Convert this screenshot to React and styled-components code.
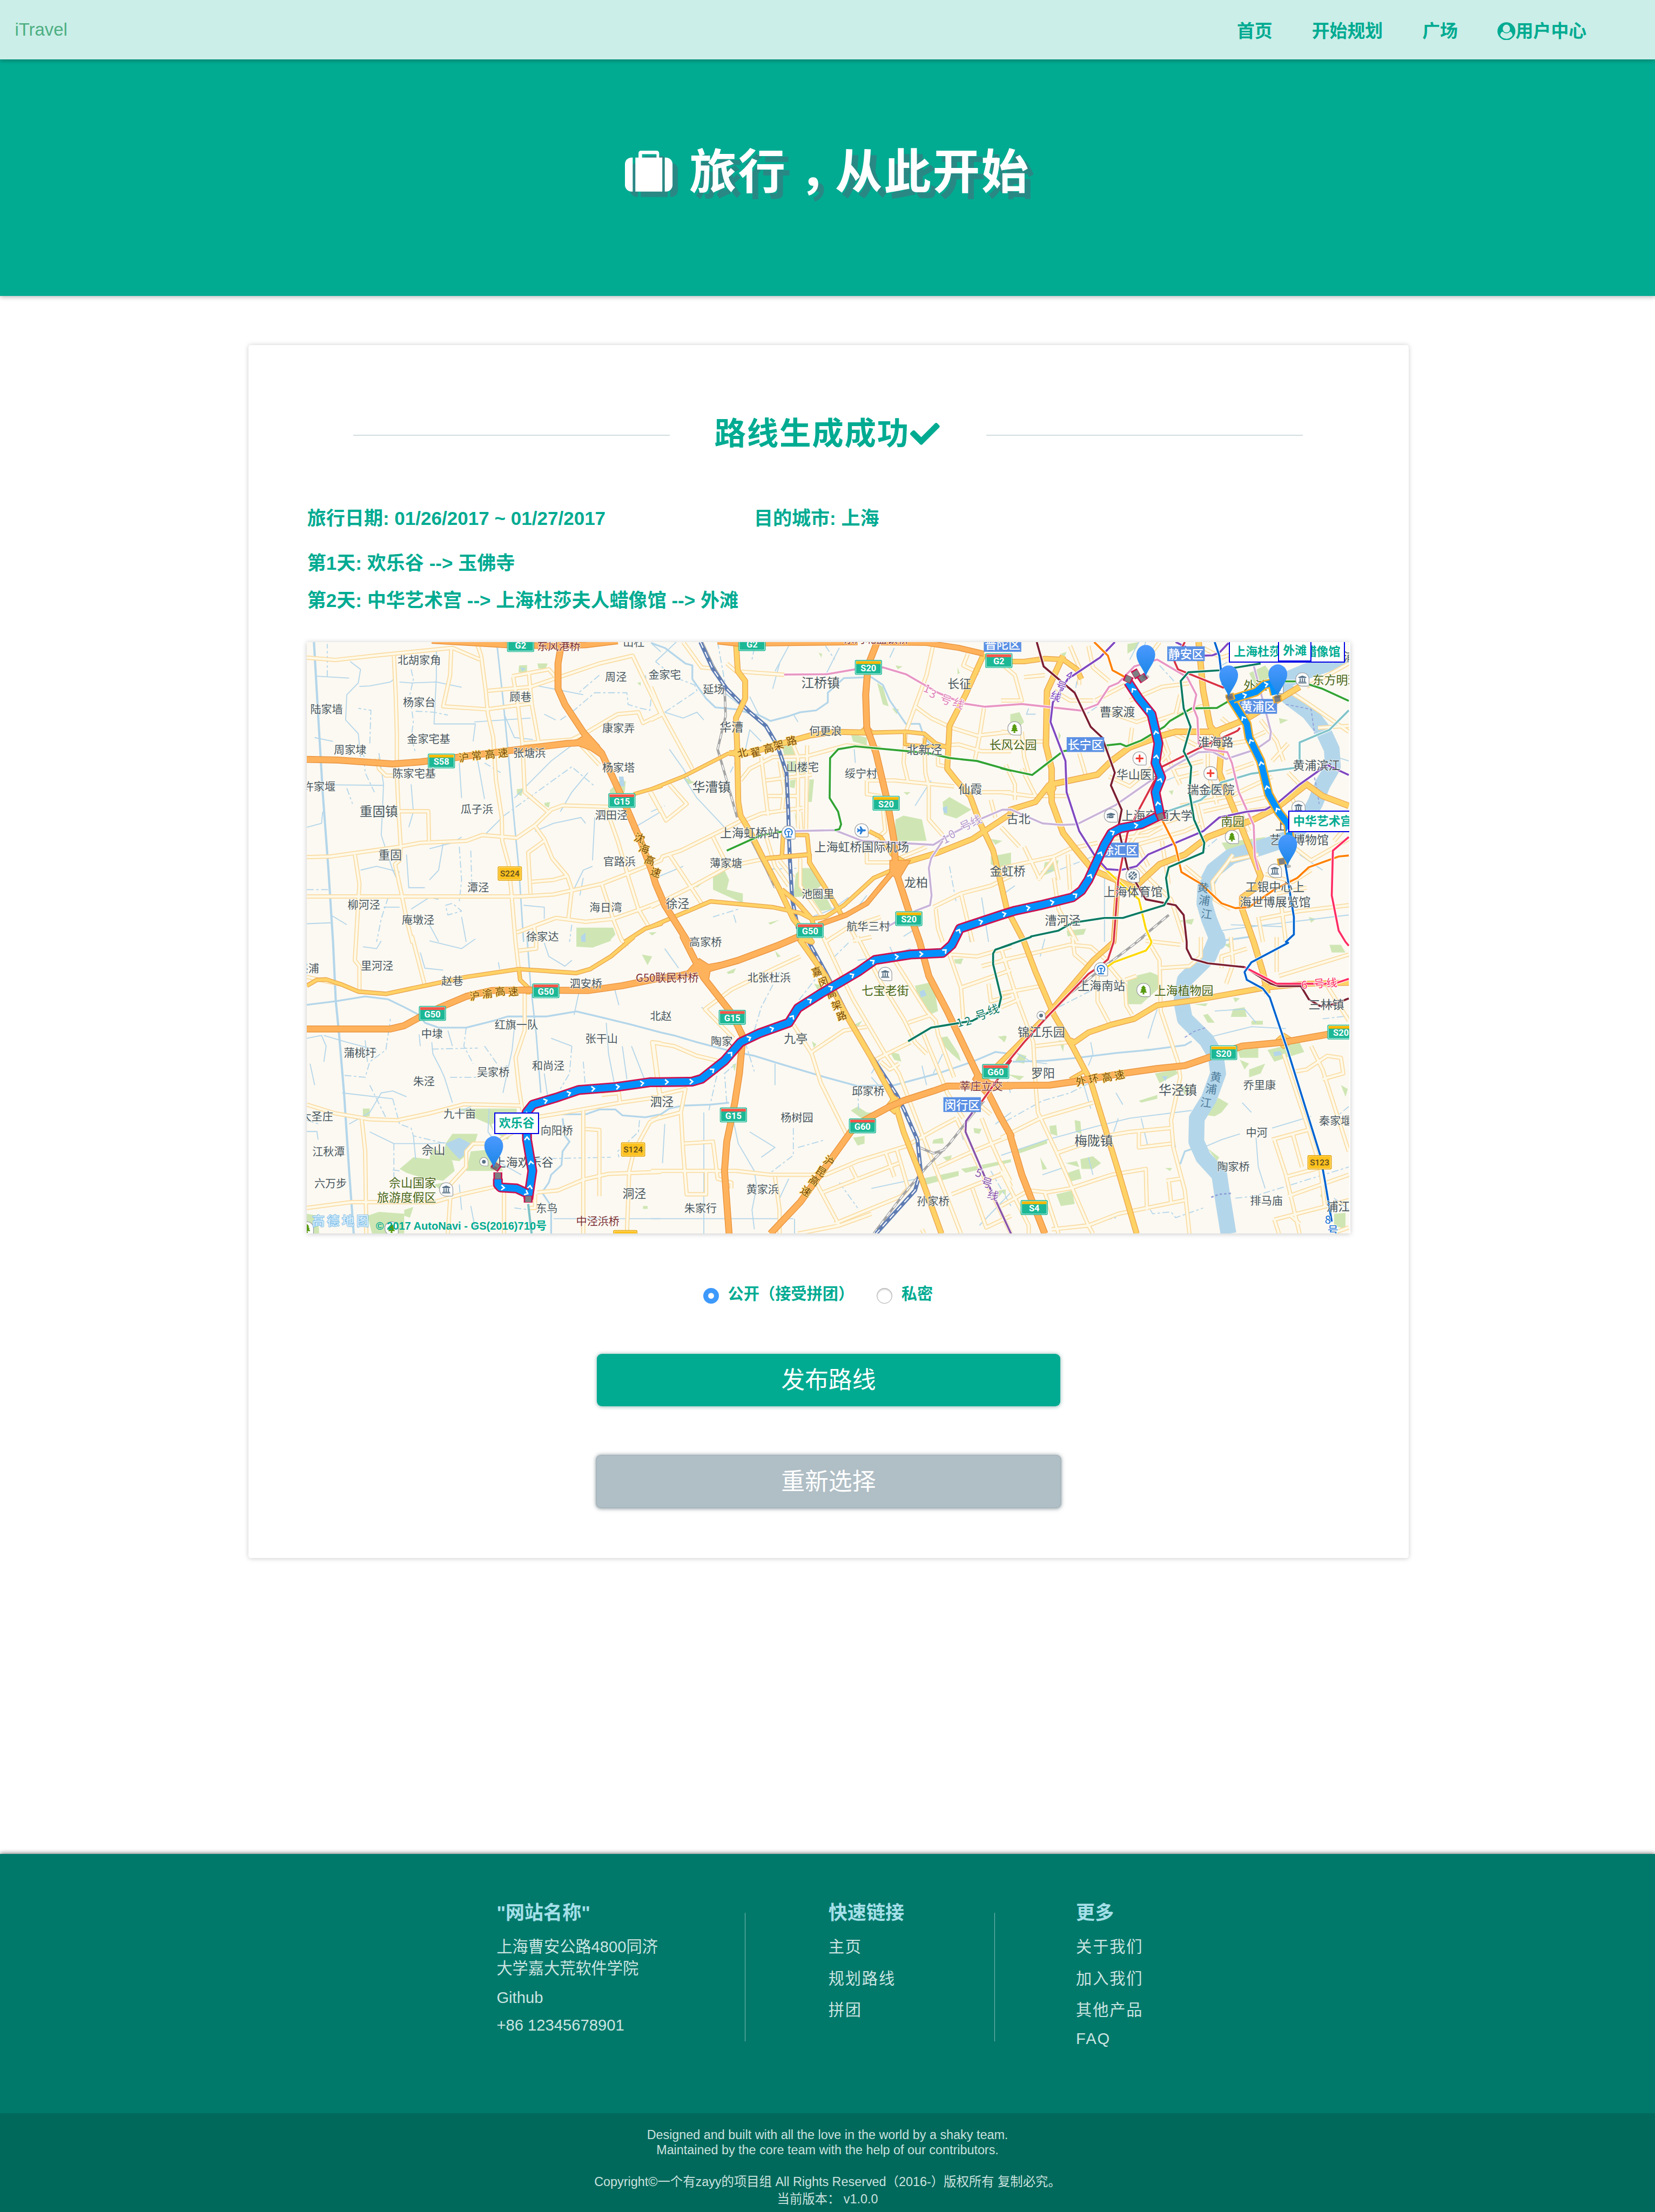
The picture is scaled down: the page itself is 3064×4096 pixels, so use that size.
import React from "react";
import styled, { createGlobalStyle, css } from "styled-components";
import {
  FaTree,
  FaPlus,
  FaUniversity,
  FaGraduationCap,
  FaBasketballBall,
  FaPlane,
  FaCheck,
} from "react-icons/fa";

/* 1rem = ten layout units; the whole page scales with the root font size. */
const Global = createGlobalStyle`
  html { font-size: 9.13px; }
  body {
    margin: 0;
    background: #fff;
    font-family: "Liberation Sans", Arial, "Noto Sans CJK SC", sans-serif;
    -webkit-font-smoothing: antialiased;
  }
  * { box-sizing: border-box; }
`;

const teal = "#00ab92";

const Page = styled.div`
  display: flex;
  flex-direction: column;
  width: 335.6rem;
  min-height: 4096px;
  overflow: hidden;
`;

/* ---------- navigation ---------- */
const Nav = styled.nav`
  position: relative;
  z-index: 1;
  display: flex;
  align-items: center;
  justify-content: space-between;
  height: 12rem;
  padding: 0 13.9rem 0 3rem;
  background: #cceee8;
  box-shadow: 0 0.3rem 0.9rem rgba(0, 0, 0, 0.28);
`;
const Brand = styled.a`
  font-size: 3.6rem;
  line-height: 12rem;
  color: #4caf82;
`;
const NavLinks = styled.div`
  display: flex;
  gap: 8rem;
  padding-top: 0.6rem;
`;
const NavLink = styled.a`
  display: flex;
  align-items: center;
  font-size: 3.6rem;
  font-weight: bold;
  line-height: 4.8rem;
  color: ${teal};
  svg {
    width: 3.7rem;
    height: 3.7rem;
    margin-right: 0;
  }
`;

/* ---------- hero ---------- */
const Hero = styled.header`
  display: flex;
  justify-content: center;
  height: 48rem;
  padding-top: 17rem;
  background: ${teal};
  box-shadow: 0 0.3rem 0.9rem rgba(0, 0, 0, 0.28);
`;
const HeroTitle = styled.h1`
  display: flex;
  align-items: center;
  gap: 3.4rem;
  height: 12rem;
  margin: 0;
  font-size: 9.6rem;
  line-height: 12rem;
  letter-spacing: 0.28rem;
  color: #fff;
  text-shadow: 1.2rem 1.2rem 0 #298884;
  svg {
    width: 9.65rem;
    height: 8.3rem;
    margin-top: -0.5rem;
    overflow: visible;
    filter: drop-shadow(1.2rem 1.2rem 0 #298884);
  }
`;
const Comma = styled.span`
  padding: 0 0.22em 0 0.27em;
  font-feature-settings: "halt";
`;

/* ---------- result card ---------- */
const Card = styled.main`
  display: flex;
  flex-direction: column;
  width: 235.2rem;
  height: 246rem;
  margin: 10rem 0 0 50.4rem;
  padding: 12.9rem 11.8rem 0;
  border-radius: 0.5rem;
  background: #fff;
  box-shadow: 0 0.1rem 1rem rgba(0, 0, 0, 0.2);
`;
const CardHead = styled.div`
  display: flex;
  align-items: center;
  justify-content: space-between;
  height: 10rem;
  padding: 0 9.6rem 0 9.4rem;
`;
const Rule = styled.span`
  width: 64.2rem;
  height: 0.2rem;
  margin-top: 0.8rem;
  background: #d3dede;
`;
const CardTitle = styled.h2`
  display: flex;
  align-items: center;
  margin: 0;
  font-size: 6.4rem;
  line-height: 10rem;
  letter-spacing: 0.2rem;
  color: ${teal};
  svg {
    width: 6rem;
    height: 6rem;
    margin: 0.2rem 0.4rem 0 0.1rem;
  }
`;
const Facts = styled.div`
  display: flex;
  margin-top: 9.2rem;
`;
const Fact = styled.p`
  width: ${(p) => p.$w || "auto"};
  margin: ${(p) => p.$gap || 0} 0 0;
  padding-left: 0.1rem;
  font-size: 3.84rem;
  font-weight: bold;
  line-height: 6.1rem;
  white-space: nowrap;
  color: ${teal};
`;

/* ---------- map ---------- */
const MapBox = styled.section`
  width: 211.6rem;
  height: 120rem;
  margin-top: 5.4rem;
  box-shadow: 0 0.1rem 1rem rgba(0, 0, 0, 0.22);
`;
const MapClip = styled.div`
  position: relative;
  width: 211.4rem;
  height: 120rem;
  overflow: hidden;
`;
const Sheet = styled.svg`
  display: block;
  width: 211.4rem;
  height: 120rem;
  font-family: "Noto Sans CJK SC", sans-serif;
`;
const Callout = styled.div`
  position: absolute;
  left: ${(p) => p.$x}rem;
  top: ${(p) => p.$y}rem;
  padding: 0.85rem 0.75rem;
  border: 2px solid #0000e6;
  background: #fff;
  font-size: 2.4rem;
  font-weight: bold;
  line-height: 2.25rem;
  white-space: nowrap;
  color: ${teal};
`;
const Attribution = styled.div`
  position: absolute;
  left: 14rem;
  top: 117rem;
  font-size: 2.2rem;
  font-weight: bold;
  line-height: 3rem;
  white-space: nowrap;
  color: ${teal};
`;
const Watermark = styled.div`
  position: absolute;
  left: 1.1rem;
  top: 116.3rem;
  font-size: 2.5rem;
  font-weight: 500;
  line-height: 2.6rem;
  letter-spacing: 0.5rem;
  white-space: nowrap;
  color: #d9eefb;
  -webkit-text-stroke: 0.2rem #7cbce8;
  paint-order: stroke fill;
`;

/* ---------- form ---------- */
const Choices = styled.div`
  display: flex;
  align-items: center;
  height: 6rem;
  margin: 9.6rem 0 0 80.4rem;
`;
const Choice = styled.label`
  display: flex;
  align-items: center;
  gap: 1.8rem;
  margin-right: 4.6rem;
  font-size: 3.2rem;
  font-weight: bold;
  line-height: 5.4rem;
  color: ${teal};
  span { padding-bottom: 0.5rem; }
`;
const Dot = styled.i`
  width: 3.2rem;
  height: 3.2rem;
  border-radius: 50%;
  ${(p) =>
    p.$on
      ? css`
          border: 1rem solid #3d99fc;
          background: #fff;
          box-shadow: inset 0 0 0.1rem rgba(0, 0, 0, 0.3);
        `
      : css`
          border: 1px solid #a6a6a6;
          background: #fff;
          box-shadow: inset 0 0.2rem 0.3rem rgba(0, 0, 0, 0.22);
        `}
`;
const Button = styled.button`
  align-self: center;
  width: ${(p) => (p.$muted ? "94.4rem" : "94rem")};
  height: ${(p) => (p.$muted ? "10.8rem" : "10.6rem")};
  margin-top: ${(p) => (p.$muted ? "9.9rem" : "8.8rem")};
  padding: 0;
  border: ${(p) => (p.$muted ? "2px solid #a9b7be" : "0")};
  border-radius: 1rem;
  background: ${(p) => (p.$muted ? "#b0bec5" : teal)};
  box-shadow: 0 0.1rem 0.8rem ${(p) => (p.$muted ? "rgba(60,80,90,.55)" : "rgba(0,90,80,.45)")};
  font-family: inherit;
  font-size: 4.8rem;
  line-height: 10rem;
  color: #fff;
`;

/* ---------- footer ---------- */
const Footer = styled.footer`
  margin-top: 60rem;
  background: #00796b;
  box-shadow: 0 -0.1rem 0.9rem rgba(0, 0, 0, 0.6);
`;
const FooterTop = styled.div`
  display: flex;
  height: 52.6rem;
  padding: 9.4rem 0 0 100.7rem;
`;
const Column = styled.div`
  width: ${(p) => p.$w};
  padding-left: ${(p) => p.$pad || 0};
  letter-spacing: ${(p) => (p.$spaced ? "0.2rem" : "0")};
`;
const Divider = styled.span`
  width: 0.2rem;
  height: 26rem;
  margin-top: 2.6rem;
  background: #7fbbb3;
`;
const ColumnTitle = styled.h4`
  margin: 0 0 2.3rem;
  font-size: 3.84rem;
  line-height: 5rem;
  letter-spacing: 0;
  color: #a4dfe8;
`;
const ColumnItem = styled.p`
  margin: ${(p) => p.$gap || 0} 0 0;
  font-size: 3.2rem;
  line-height: 4.4rem;
  white-space: nowrap;
  color: #cce4e1;
`;
const Legal = styled.div`
  height: 20.4rem;
  padding-top: 3rem;
  background: #00695c;
  text-align: center;
  font-size: 2.56rem;
  color: #cce1de;
`;
const LegalLine = styled.p`
  margin: ${(p) => p.$gap || 0} 0 0;
  line-height: ${(p) => (p.$tall ? "3.6rem" : "3rem")};
  white-space: pre;
`;

/* ================= map data ================= */
/* Coordinates are written per map tile: a letter picks the tile, then x,y pairs follow. */
const TILE = {
  A: [610, 1290], B: [1320, 1290], C: [2030, 1290],
  D: [610, 1900], E: [1320, 1900], F: [2030, 1900],
};
const SX = 730 / 1568;
const SY = 620 / 1568;
const at = (t, x, y) => [TILE[t][0] + x * SX, TILE[t][1] + y * SY];
const parse = (s) => {
  let t = "A";
  const out = [];
  s.trim().split(/\s+/).forEach((k) => {
    if (TILE[k]) t = k;
    else {
      const [x, y] = k.split(",").map(Number);
      out.push(at(t, x, y));
    }
  });
  return out;
};
const pts = (s) => parse(s).map((p) => p.map((n) => n.toFixed(1)).join(",")).join(" ");
const list = (s) => s.split(/[;\n]/).map((x) => x.trim()).filter(Boolean);
/* Each block names its tile first and is followed by polylines separated by ";" */
const block = (o) => Object.entries(o).flatMap(([t, s]) => list(s).map((l) => `${t} ${l}`));

const canals = [
  "A 57,30 75,400 95,800 120,1200 140,1568 D 152,330 165,480 188,800 210,1200 230,1522",
  "D 26,348 150,330 280,305 380,320 450,360 515,400 540,440 600,465 720,465 840,430 900,408 1070,408 1200,382 1300,410 1440,450 1568,490 E 100,505 200,540 330,580 450,610 560,650 760,720 900,765 1060,760 1250,700 1400,640 1500,590 1568,600",
  "F 50,640 200,635 330,620 500,595 640,580 800,555 830,535",
  "D 1130,910 1240,910 1300,885 1370,885 1400,915 1500,925 1568,910 E 80,880 140,865 260,860 340,850",
  "D 1140,930 1150,1020 1170,1050 1140,1100 1135,1170 1090,1220 1080,1260 1050,1310 1090,1380 1090,1522",
  "B 0,35 60,60 150,140 180,150 180,220 240,320 280,365 370,375 430,395 470,405 520,435 600,410 650,390 720,380 770,340 770,290 840,215 960,210 1010,250 1040,330 1110,450 1170,450 1190,520 1230,570",
  "F 780,1165 800,1100 850,1080", "F 960,20 1080,0",
];
const creeks = [
  "A 853,30 880,320 905,620 930,960 950,1200 970,1568",
  "D 985,0 1000,240 1025,500 1045,800",
  "A 350,1020 400,1200 440,1300",
  ...block({
    A: `430,235 480,240 590,235 700,262; 215,130 260,170 250,240 200,300 195,430 250,500 260,620; 255,258 300,255 390,235 410,215
      480,170 490,220 475,300 490,440 480,520 500,600; 590,60 590,210 580,450 760,450 750,540; 755,440 1000,420; 500,385 580,390 640,405
      340,600 360,760 355,900 350,1020 ; 95,762 360,765 ; 26,1300 120,1300; 26,1475 130,1470; 130,1430 200,1480; 380,1340 350,1450 330,1568
      700,1030 660,1060 560,1090; 885,920 800,1020; 885,920 1180,670 1280,770; 930,830 1090,640 1180,560 1220,490
      885,400 930,520 1010,530; 1130,430 1190,380 1280,290 1420,290 1425,350 1480,370 1520,380 1525,320 1500,200
      1020,1000 1100,960 1220,930 1240,960; 1280,930 1270,1150; 630,1380 660,1370 700,1410 640,1430 630,1380; 1180,1320 1230,1200 1270,1180
      970,1380 1060,1390 1060,1450; 115,210 115,40; 70,205 210,215; 60,520 140,540; 300,550 305,380 250,370; 690,650 700,830; 770,640 800,835
      800,650 870,700; 260,1200 330,1180 430,1210; 480,1400 560,1340 600,1350; 690,1080 700,1250 690,1360; 460,1120 470,1290 540,1290
      700,1440 720,1568; 1180,1480 1170,1568; 1110,430 1060,400; 1010,250 1230,300; 1300,200 1210,290; 1250,700 1180,800 1130,900
      360,1390 430,1390; 270,560 280,700 320,800; 1440,990 1568,900; 1530,40 1568,80; 1540,180 1568,210; 600,1568 560,1480
      26,980 90,960 95,900; 200,780 225,860; 480,760 490,900 470,980; 620,1060 600,1200 560,1250; 740,1100 745,1290; 1230,1240 1215,1330`,
    B: `20,130 110,30; 60,390 200,280 190,250 100,210 20,130; 60,390 140,420 200,390 230,430; 320,290 430,395; 290,30 330,290; 430,310 470,405
      410,590 430,480 480,540; 345,700 370,640 400,590; 1220,740 1150,870; 430,1010 480,1100 540,1290 600,1320 660,1380 700,1440 790,1400 860,1340
      1300,1180 1330,1370; 885,580 890,650; 140,720 200,830 320,980; 450,60 440,120; 560,140 530,270; 600,50 540,180; 760,50 800,120; 1060,60 1040,110
      80,580 140,680 170,740; 0,900 60,870; 620,400 640,440; 930,700 1000,680 1000,640; 520,1195 640,1190; 1480,560 1500,600; 20,1240 140,1180
      1350,1320 1390,1568; 1440,1340 1470,1568; 1100,1540 1180,1480; 270,1440 380,1400; 360,1430 370,1470; 820,60 760,200; 1280,640 1290,700; 900,1390 940,1330`,
    C: `150,400 110,400 120,370; 330,230 320,300 370,400 420,360; 60,1280 0,1330; 560,120 600,30; 690,150 760,240; 900,1520 1020,1500 1514,1430; 1000,1480 1230,1490
      940,1040 870,1110; 1410,600 1514,640; 450,1210 450,1568; 400,1130 250,1200 150,1210; 720,740 760,720; 1300,1120 1400,1200; 960,150 1050,90; 630,30 600,110`,
    D: `100,505 200,540 330,580; 400,830 430,960 480,980 490,1020 630,1060; 515,500 520,560; 570,540 575,600 610,680 625,720 660,850; 720,465 710,560 750,650
      930,460 920,580 880,800; 26,520 90,505 110,560 100,640; 26,940 80,960; 26,998 70,998 75,1040; 180,800 400,830; 190,710 280,720 300,640 370,580 390,420
      210,960 300,900 350,800 400,790 460,820; 300,1000 405,1060 570,1060 630,1055; 405,1060 405,1300; 870,1160 960,1220; 820,880 815,1000 840,1040
      1475,940 1470,1000 1380,1100 1385,1130; 350,20 330,60 270,50; 520,80 540,160 620,170; 860,130 870,190; 1060,30 1080,100 1150,150 1180,120; 560,20 700,60 760,10
      1180,560 1170,700 1130,780; 1330,440 1340,600 1370,780; 1400,560 1420,730; 650,720 760,720 900,660; 1210,290 1190,400; 1365,260 1385,350; 960,1140 1350,1130
      1100,1445 1568,1445; 690,1270 700,1400; 930,1390 1000,1400; 760,860 680,900; 400,1195 430,1200; 300,760 380,950; 1440,560 1500,740; 280,530 290,640; 570,575 770,570
      1060,700 1080,860; 1090,520 1180,560; 1230,640 1240,780; 40,650 60,760; 640,480 660,560; 800,560 860,660; 490,1020 500,1140; 740,1380 760,1500`,
    E: `330,850 320,700 370,650; 360,950 380,1060 450,1200 460,1280 440,1400 450,1500; 540,650 540,760; 620,980 620,1120 520,1210; 0,1445 620,1445; 625,1445 625,1522
      900,780 905,900; 960,720 990,760; 220,360 330,480; 560,180 480,360 450,480; 60,960 50,1160; 230,900 230,1522; 410,540 450,690; 900,120 1060,90 1130,60
      1010,600 960,700; 740,180 640,330; 1040,50 1060,100; 1270,600 1230,700; 820,1260 900,1390; 960,1290 1160,1240; 430,1000 540,1080 480,1130; 640,1080 760,1040
      1500,960 1568,900; 1340,960 1360,1040; 1480,1200 1568,1380; 1180,660 1200,760; 600,1240 560,1340; 860,30 800,100; 60,60 120,160; 1568,1310 1430,1480; 300,640 250,900`,
    F: `60,590 130,640 200,650; 390,540 400,600 380,660; 20,945 180,840 300,800 400,740; 0,1120 200,1040 420,970 560,930 830,890; 880,1080 960,1040 1040,1010
      1020,1340 1100,1330 1514,1180; 680,370 660,440 640,520; 510,930 490,1000; 650,1400 660,1420 740,1410 760,1440 880,1390; 1110,1030 1120,1180 1150,1290
      920,510 1090,460 1240,470; 1400,420 1514,405; 1350,920 1180,980; 380,1130 400,1220; 1514,870 1420,960; 930,380 1060,370 1110,440; 190,10 170,100; 250,360 400,270
      360,760 390,880; 500,800 530,860; 40,800 20,700; 180,1220 280,1180; 610,930 640,1080; 330,1480 500,1440; 1050,850 1090,900; 1450,1340 1514,1400; 760,1080 740,980`,
  }),
];
const river =
  "C 1500,110 1330,180 1230,230 1250,310 1340,390 1400,480 1440,580 1445,670 1400,760 1370,850 1330,940 1270,1030 1130,1085 1000,1130 925,1200 890,1280 885,1370 905,1450 945,1568 F 940,0 905,100 800,220 785,330 800,420 895,530 935,610 945,700 905,830 852,930 850,1050 880,1130 950,1220 965,1340 990,1522";
const ponds = [
  "D 630,1060 690,1030 740,1060 720,1110 690,1140 650,1090", "F 1185,590 1215,585 1225,605 1190,612",
  "E 1170,280 1190,270 1200,300 1175,310", "A 955,160 980,165 965,180", "B 1270,880 1290,870 1290,910 1275,905",
  "A 1385,720 1405,720 1410,770 1390,770", "A 1220,1540 1240,1520 1240,1568 1222,1568", "F 700,715 725,715 715,740",
];
const greens = block({
  A: `950,150 985,148 985,185 948,185; 1030,140 1075,140 1065,170 1035,165; 940,785 970,780 960,820 942,810; 1060,855 1085,850 1080,880 1063,870
    1395,735 1415,745 1410,800 1350,830 1345,790; 1200,1495 1360,1495 1370,1530 1340,1568 1200,1568; 1465,240 1480,235 1480,255; 1515,1520 1550,1518 1530,1535`,
  B: `730,85 745,90 742,110; 985,240 1010,260 1035,360 1010,350; 570,560 610,560 630,620 580,610; 590,640 650,640 680,700 600,700; 690,735 710,735 700,850 685,850
    1270,850 1300,825 1395,890 1330,935 1275,915; 1065,940 1100,920 1180,940 1200,1050 1060,1050; 655,1190 700,1190 750,1270 690,1330 620,1340 630,1220
    270,1220 320,1200 340,1250 330,1300 400,1320 400,1370 270,1300; 700,1340 760,1330 790,1400 740,1410; 140,720 190,750 160,760; 870,500 940,520 940,560 880,540
    1480,1130 1568,1110 1568,1210 1480,1170; 1050,370 1080,375 1070,400; 1480,1040 1530,1050 1500,1070; 605,740 630,735 625,780 605,775; 625,900 640,960 635,990
    1100,800 1130,800 1115,815; 190,1270 230,1260 200,1290; 1065,150 1095,155 1075,170; 1335,160 1345,190 1335,195; 510,1470 560,1455 520,1480`,
  C: `40,400 80,390 100,440 40,510; 550,40 600,30 590,60 550,90; 400,560 470,560 470,600; 960,1060 1150,1030 1140,1060 980,1100; 250,490 260,510 250,540
    285,1510 370,1500 360,1530 290,1540; 190,1160 250,1150 240,1200 180,1230; 0,1130 30,1120 40,1190; 260,90 285,80 275,110; 1210,420 1250,430 1215,450; 1300,940 1400,900 1360,960
    1080,190 1150,150 1180,200 1110,260; 1340,1440 1370,1450 1350,1470; 770,1460 840,1450 830,1480; 560,940 590,930 580,960; 730,795 750,790 745,815`,
  D: `1200,0 1350,0 1350,20 1270,55 1200,50; 690,880 940,880 940,920 830,960 840,1000 820,960 760,930; 630,1060 660,1010 770,1010 760,1050 720,1120 690,1150 620,1140
    430,1190 490,1130 560,1140 570,1080 620,1110 660,1150 670,1200 620,1250 540,1240 460,1210; 740,1100 830,1090 880,1200 720,1200; 580,1270 620,1260 640,1330
    290,1430 340,1410 450,1420 450,1520 310,1522; 26,1420 75,1430 80,1522 26,1522; 1485,90 1530,100 1510,145; 270,880 300,880 300,920 270,925
    450,1400 490,1385 475,1440 450,1430; 1490,1380 1510,1380 1510,1395 1490,1395; 840,1000 940,970 900,1040`,
  E: `1150,250 1230,230 1250,380 1210,400 1160,300; 1040,590 1080,600 1090,640 1060,630; 1245,520 1290,510 1340,600 1350,640 1310,600; 870,890 900,870 940,900 1010,900 940,950
    880,1030 930,1020 930,1060 900,1070; 1405,980 1440,985 1430,1010 1408,1005; 1180,1240 1340,1200 1340,1225 1200,1270; 1350,1190 1568,1140 1568,1155 1370,1210
    1510,510 1550,510 1540,540; 1270,1130 1310,1120 1300,1160; 1230,1040 1270,1030 1275,1060 1225,1060; 1480,1310 1540,1295 1510,1340; 330,180 370,160 360,185 335,190
    540,70 565,100 550,105; 1320,115 1360,110 1350,140 1325,135; 885,450 920,430 900,465; 700,535 720,550 710,570; 355,655 370,650 365,690; 0,820 50,830 10,850; 710,240 750,250 730,280`,
  F: `550,210 650,180 690,200 690,260 610,345 550,345; 1030,580 1120,570 1120,620 1040,620; 1040,630 1080,650 1060,680; 1080,680 1150,650 1130,700 1080,720
    1160,580 1300,540 1320,590 1240,620 1190,640; 670,700 760,680 770,700 690,750; 600,840 680,810 680,830 610,850; 945,825 990,855 960,900 930,920 900,915
    210,970 240,965 245,1020 215,1010; 320,940 345,945 350,1010 325,1000; 70,1090 200,1040 200,1060 80,1110; 345,1140 400,1125 435,1160 400,1190 350,1190
    280,1160 330,1150 340,1180; 290,1210 340,1190 350,1240 300,1255; 170,1130 200,1190 180,1195; 240,1320 310,1300 320,1370 260,1380; 1450,1420 1500,1415 1500,1500 1450,1480
    900,1085 950,1130 940,1150; 1010,370 1060,360 1070,410 1000,410; 1090,430 1140,430 1140,450 1090,450; 80,600 110,610 100,650 60,640; 1480,760 1510,780 1500,820
    1430,40 1480,40 1500,80 1440,80; 780,770 820,760 840,790 800,810; 0,510 20,505 10,540; 30,705 100,715 80,735; 880,400 900,395 930,440 900,440; 1010,310 1040,315 1020,335
    970,40 1000,30 1000,60; 840,345 900,340 890,355; 620,575 690,572 640,582; 715,1185 745,1185 735,1200; 0,1300 20,1295 20,1330; 1400,1300 1400,1340 1390,1330; 250,530 275,535 270,590`,
});
const streets = [
  "A 405,100 413,300 418,500 418,700 425,900 435,1080 430,1150 410,1170 440,1330 460,1450 485,1568 D 485,0 540,250",
  "A 765,30 785,100 805,280 815,400 838,520 850,740 875,930 877,1050 905,1170 918,1330 930,1500 935,1568 D 950,180",
  "A 235,1120 255,1270 240,1568 D 235,120 255,150 255,270", "A 1015,1480 1025,1568 D 1025,60 950,70",
  "A 26,1335 960,1335 1100,1325 1310,1270 1420,1220 1568,1150 B 50,1130 130,1100 370,960 400,940",
  "D 1000,930 1200,890 1390,850 1568,820 E 40,810 150,780 130,900 140,1100 155,1320 240,1320 240,1200",
  ...block({
    A: `26,110 150,122 320,100 660,60 780,120; 655,60 650,200 620,360 810,375 1005,345; 920,205 1080,170 1110,210; 815,280 1000,260 1150,200 1300,140 1445,100 1568,400 1490,445 1470,390 1380,400 1350,420 1250,490 1180,530 960,550
      925,210 945,350 965,550 975,800 1080,905; 993,190 1005,345 1035,540; 26,1133 130,1130 430,1080 520,1060 720,1050 790,1020 940,1035 1020,970 1090,890 1140,868 1340,875
      430,898 555,898 558,1050; 1020,975 1060,1040 1095,1140 1160,1230 1180,1300 1165,1450; 1060,1050 990,1110 1000,1320; 1005,1260 1100,1250 1160,1230
      940,1520 1110,1445 1240,1465 1360,1450 1480,1400 1568,1360; 1330,885 1380,1050 1430,1250 1470,1400 1520,1500; 1310,1270 1360,1450 1400,1568; 330,625 340,680 370,715 415,715; 1220,560 1300,660; 1520,800 1568,900`,
    B: `330,140 370,180 580,198; 140,30 220,160 265,165; 0,430 50,400; 0,260 50,400 180,680; 480,620 510,920; 400,950 480,910 660,880; 390,740 430,680 530,620 680,615 850,560 1000,575
      500,740 700,710; 510,820 640,820; 620,560 640,620 640,980; 680,560 675,1000; 560,640 580,790 570,900; 0,1390 170,1290 340,1180 500,1140; 80,1120 220,1370; 270,1030 330,1170; 80,760 155,860 65,945 0,800
      1230,40 1200,200 1150,360 1110,490; 1150,360 1220,420 1310,470 1420,510 1568,490; 1450,370 1430,520 1410,640; 1110,490 1100,650 1120,750; 1190,520 1195,700 1210,770 1210,940 1270,1020
      940,740 1060,740 1320,770; 940,740 940,810 1000,820; 1010,880 1020,1000 980,1040; 1380,90 1360,150 1430,190; 1440,800 1568,800; 1280,560 1340,555 1440,590 1568,590; 940,1090 940,1160 1040,1160 1200,1080
      1230,1390 1350,1320 1480,1280 1568,1230; 1240,1400 1250,1500 1270,1568; 1350,1320 1400,1568; 650,1140 650,1280 740,1430; 760,1568 850,1500 1000,1440; 860,1480 900,1568; 500,1020 540,1180 600,1280
      650,900 655,1000; 560,1150 620,1240; 1250,620 1250,660 1290,670; 1480,840 1500,930`,
    C: `0,490 90,500; 0,540 200,540; 90,490 100,620 120,700; 300,50 340,160 340,250; 470,390 590,440 640,420; 570,470 560,560; 700,500 730,600 700,640; 0,800 130,820 300,820; 90,680 150,820; 340,600 370,720
      0,1190 230,1130 300,1090 420,1060; 160,1250 230,1140 250,1250; 100,1080 170,1250; 230,1240 250,1400 330,1568; 720,480 850,560; 720,430 870,360 900,360; 960,420 1010,470; 1130,430 1200,540 1230,640; 1250,280 1330,340 1514,490
      540,1100 600,1000 780,930; 560,1080 800,1000 870,960; 780,870 1000,820 1180,720; 700,560 780,760; 760,730 860,700; 900,500 900,700 940,860; 880,900 1170,820; 600,1180 650,1250 740,1350 800,1568; 730,1270 700,1050
      870,1250 800,1180; 1010,1120 980,1170 920,1260 930,1350 1000,1400; 1000,1150 1120,1120; 1250,700 1300,760; 1150,1220 1270,1260 1350,1200; 1250,1060 1350,1150 1514,1040; 1130,1450 1300,1410 1514,1380; 1120,1440 1140,1568
      1220,1380 1240,1568; 1514,960 1450,1050; 380,50 400,160 470,230; 410,330 540,250; 470,720 560,770 680,650; 230,280 300,330 400,330; 1250,550 1180,640; 1040,900 1080,1000; 850,850 880,990; 950,560 1060,540 1150,490; 640,1180 600,1080
      0,140 60,200 90,330 0,330; 100,210 190,200; 1330,260 1514,140; 1300,120 1400,60; 560,330 700,260 830,240; 660,440 760,400 780,300; 740,680 880,640; 980,700 1100,650; 300,1300 290,1120; 0,980 80,1080; 20,660 60,760 60,840
      690,30 640,110; 880,60 960,110 1010,90; 480,1040 640,1020 700,980; 1380,470 1514,460; 1060,900 1180,880; 1300,780 1260,820 1290,880; 1200,1320 1330,1290`,
    D: `26,205 100,225 180,245; 975,290 975,480 935,620 950,780 965,890; 26,860 150,905 300,935 420,940 560,905 710,858 960,865; 265,935 280,1100 285,1522; 940,990 840,1060 750,1060 720,1100 720,1180 650,1270 650,1350 640,1522
      26,1390 220,1360 580,1360 700,1320 850,1280; 885,1310 885,1522; 1030,1310 1120,1300 1230,1245 1340,1215 1568,1205; 1230,890 1230,1522; 1240,985 1300,990 1300,1330; 1568,920 1520,950 1450,1100 1430,1200 1420,1522
      1568,545 1530,540 1560,800; 1020,1320 1020,1390 990,1390; 1310,810 1385,800 1390,850; 1390,0 1420,50`,
    E: `650,100 540,160 350,270 235,370 360,520; 0,540 100,560 200,610 290,635; 10,540 40,810; 0,940 130,900; 620,450 700,600 740,750 850,1010; 700,590 840,480 940,460; 750,0 830,200 880,320 1020,600 1080,700 1200,1070 1310,1400 1350,1522
      900,0 1000,230 1100,420 1150,540 1200,600; 1050,100 1200,380 1240,430 1250,500 1320,720; 1120,440 1220,400; 960,640 1130,540; 1000,640 1040,680 1080,650; 0,1200 370,1200 520,1220 760,1220 900,1150 1120,1070
      1130,1060 1250,980 1330,930; 870,1180 900,1250; 1020,1100 1060,1230; 1070,1090 1120,1290 1090,1330 800,1470; 720,1260 820,1480; 750,1310 1080,1160; 640,1522 820,1480 960,1420; 145,1060 270,1050 290,1240 350,1260 350,1290; 540,1230 560,1400 560,1522
      1330,930 1450,1230 1568,1522; 1250,1180 1400,1100 1568,1020; 1310,1320 1540,1210; 1400,1290 1460,1490 1568,1430; 1300,90 1350,260 1360,420; 1300,90 1420,100 1568,50; 1350,260 1568,170; 1440,930 1480,1050 1568,1280; 1440,150 1568,110
      1180,480 1240,650 1290,800 1360,930; 880,20 960,0; 1470,240 1480,330 1568,300; 1430,860 1480,910; 0,820 30,830 40,800; 1180,1500 1190,1522`,
    F: `0,120 80,100 300,40 390,50 470,130; 310,0 320,90 380,150; 0,360 80,320; 0,60 70,320 140,540 150,760 160,900 240,1100 380,1480 400,1522; 0,290 180,250; 150,560 290,540; 420,180 420,330 470,440; 470,150 540,250 545,350 570,400
      0,1030 170,930 400,850; 240,1110 460,1020 560,1000 740,980; 600,1000 600,1080 740,1060; 650,40 690,120 695,380 770,640 780,720 740,940 750,1080 800,1300 820,1522; 480,1220 300,1290 200,1310 120,1300 0,1380; 480,1220 630,1190 635,1400
      720,1250 780,1240; 730,1250 740,1360; 800,1350 510,1420 380,1480 220,1500; 190,1310 250,1522; 0,1200 120,1480 120,1522; 690,160 820,150 870,100 870,0; 1000,0 1010,140 980,240; 960,160 960,100 1070,60; 1200,0 1200,180; 1210,200 1514,90
      1280,250 1360,240; 1420,250 1514,430; 1350,560 1400,680 1514,1100; 1280,690 1330,680 1420,610 1480,620 1490,700 1400,730; 1180,1040 1335,990; 1190,1040 1240,1220 1300,1522; 1270,1010 1310,1180; 1240,1230 1400,1180; 1250,1330 1514,1220
      1190,1450 1420,1380 1514,1350; 1190,1450 1210,1522; 1230,600 1340,990 1390,1180 1410,1380; 630,20 780,40; 540,220 590,200; 0,1160 40,1250; 1440,1522 1514,1490; 1260,1430 1300,1470`,
  }),
];
const arterials = [
  ["B 370,30 378,180 410,230 410,320 370,420 375,560 380,850 390,920 430,1000 480,1120 560,1300 620,1450 700,1568 E 640,0 760,200 860,420 960,620 1060,840 1100,1000 1160,1180 1265,1522", 9],
  ["B 340,600 420,600 500,575 600,540 690,510 800,490 960,495", 9],
  ["B 960,495 1110,490 1190,500 1240,550 1290,570", 6], ["B 1105,490 1105,555 1290,570", 4], ["B 1195,520 1190,560", 4],
  ["B 1450,90 1370,300 1300,460 1290,680 1330,740 1390,820 1430,950 1490,1100 1520,1250 1550,1400 C 100,1568 F 150,180 230,400 310,560 390,740 450,970 510,1200 590,1522", 9],
  ["B 1110,1160 1250,1110 1400,1040 1568,910 C 40,890 150,850 210,760", 9],
  ["B 950,1000 1000,1030 1050,1120 1110,1160", 6],
  ["B 500,1140 690,1120 690,1160 780,1330 830,1430", 7], ["B 570,1130 575,1020 680,1020 690,1130", 6],
  ["B 570,1300 640,1370 700,1450 710,1490", 7],
  ["A 1450,810 1568,770 B 0,785 140,720 340,600", 5],
  ["A 1410,1568 1500,1500 1568,1475 B 0,1490 260,1360 530,1390 650,1420 700,1450 760,1440 840,1380 970,1240 1050,1200", 6],
  ["D 26,250 70,220 110,218 180,245 250,280 370,292 560,245 720,205 950,165 1200,185 1260,165 1350,100 1450,0", 6],
  ["D 950,170 955,220 990,260 990,295", 6],
  ["C 0,130 100,130 190,115 270,120 330,170 350,220", 8],
  ["C 270,100 200,280 195,560 220,680 220,850 270,1010 330,1100 400,1200 580,1290 690,1170 800,1120 900,1030 1100,940 1200,880 1330,760 1400,820 1514,870", 10],
  ["C 860,30 880,280 910,460 930,490 960,560 950,700 1000,850 1060,1020 1130,1230 1110,1290 1050,1340 1050,1400 1100,1568 F 1140,180 1160,290", 10],
  ["C 220,760 420,710 480,640 560,570 700,510 760,490 930,490 1060,430 1300,260", 10],
  ["C 510,1240 500,1400 490,1568 F 400,120 200,400 60,570 0,640 E 1500,670 1440,720", 8],
  ["F 300,530 320,540 380,490 480,450 580,420 680,350 840,325 1150,260 1330,240 1514,235", 9],
  ["F 300,730 360,690", 5], ["F 1200,530 1230,500 1270,530 1230,565 1200,530", 4],
];
const motorways = [
  ["A 26,632 160,635 400,655 520,645 690,620 920,585 1160,550 1240,545", 11],
  ["A 570,22 830,40 900,45 1100,50 1240,45 1380,25", 10],
  ["A 1120,30 1130,70 1120,140 1120,270 1150,350 1240,510 1310,600 1400,830 1480,1050 1530,1210 B 20,1270 60,1380 160,1568 E 140,0 200,140 230,210 350,390 400,510 385,700 365,850 330,1050 320,1200 340,1522", 11],
  ["B 290,28 380,40 500,38 900,32", 8], ["B 1000,32 1200,35 1340,60 1450,90", 9],
  ["B 985,30 945,150 935,300 940,470 980,600 1030,850 1060,1060 1065,1200 1120,1400 1170,1568 E 1210,200 1290,380 1420,700 1460,780 1520,920 1568,1020 F 40,1020 90,1220 190,1522", 11],
  ["B 730,1480 850,1430 940,1370 1010,1270 1060,1200", 8],
  ["D 26,472 390,472 450,455 520,410 600,365 720,305 830,275 990,272 1250,275 1400,250 1568,210 E 120,200 230,170 380,120 560,40 640,0", 11],
  ["E 520,1522 650,1360 760,1180 870,1000 930,940 1040,870 1100,840 1230,790 1290,765 1568,765 F 0,762 210,760 330,740 500,705 680,675 800,660 900,620 1050,560 1230,540 1420,500 1514,490", 11],
];
const blobs = [
  ["A 1180,550 1225,515 1230,470 1300,560 1330,640 1260,585", "m"], ["E 175,150 210,110 250,140 300,130 260,160 250,230 220,200 160,200 150,185", "m"],
  ["B 915,480 940,450 970,490 960,540", "a"], ["B 330,600 370,580 400,610 370,620", "a"], ["B 1040,1150 1130,1150 1080,1250 1040,1220", "m"],
  ["E 1020,870 1060,810 1100,850 1060,910", "a"], ["E 1400,730 1420,690 1480,740 1568,750 1568,770 1480,790 1470,830 1430,780", "m"],
  ["C 190,780 215,730 240,780 215,840", "a"], ["C 905,480 935,470 970,480 940,520", "a"],
];
const railsBlue = [
  "B 215,30 270,170 330,270 430,390 500,460 550,560 590,700 598,900 600,1000 605,1150 615,1350 640,1500",
  "E 675,0 760,180 860,410 960,610 1070,810 1100,880 1160,1040 1175,1200 1150,1300 1050,1430 980,1522",
];
const railsGray = [
  "B 222,30 270,150 320,250 325,410 290,580 320,700 375,930", "B 430,1030 500,1190 540,1290",
  "E 970,1522 1100,1320 1200,1180 1300,1060 1400,910 1450,840", "E 1170,1080 1230,1110 1280,1090",
  "F 170,450 300,290 420,180 620,0", "C 590,1568 730,1430",
];
const metro = [
  ["#c9b3d8", "B 620,1000 800,995 920,1050 1230,1070 1300,1020 1430,940 1530,890 1568,890 C 40,888 180,960 260,968 330,965 500,865 640,750 760,660 860,595 920,592 980,630 1110,580 1170,530 1175,490 1140,330 1100,150"],
  ["#c9b3d8", "B 1270,1050 1220,1140 1210,1190 1222,1330 1215,1380 1150,1410 1030,1490"],
  ["#80c3c8", "C 720,900 870,840 960,750 1090,705 1280,675 1300,640 1300,545 1430,480 1514,380"],
  ["#33a333", "B 330,1100 480,1020 570,1003"],
  ["#33a333", "B 800,995 820,990 828,965 815,900 778,830 780,625 815,580 890,565 1210,600 1300,625 1420,640 1568,690 C 0,678 135,712 270,590 460,560 520,552 545,565 610,535 710,465 735,435 830,370 940,368 1010,320 1120,270 1220,232 1300,232 1400,270 1514,332"],
  ["#e896c3", "B 580,197 765,195 890,170 1010,160 1110,195 1250,290 1360,345 1455,362 1568,352 C 90,348 350,382 420,350 470,260 510,240 580,155 680,120 810,210 850,300 838,370 855,420 860,550 890,580 985,595 1005,650 1035,800 1100,970 1105,1130 1120,1200"],
  ["#ffd800", "C 400,1130 430,1170 560,1310 600,1350 630,1500 655,1568 F 650,40 630,70 490,130 460,155"],
  ["#8048c0", "C 495,30 430,110 290,220 225,340 215,440 280,640 285,800 340,1000 410,1130 460,1195 520,1200 590,1180 640,1120 760,1060 880,1000 950,930 1070,900 1150,890 1210,850 1300,760 1420,660 1514,712"],
  ["#8048c0", "C 760,30 880,100 920,98 950,85 990,35"],
  ["#ff8000", "C 405,30 465,100 485,175 540,210"],
  ["#ff8000", "C 700,940 760,1080 785,1210 870,1270 960,1370 1020,1395 1080,1390 1190,1300 1290,1240 1340,1185 1470,1130 1514,1125"],
  ["#d93343", "C 800,30 755,130 770,170 970,265"],
  ["#d93343", "C 1040,470 1030,485 870,570 700,670 600,890 550,1010 510,1250 490,1568 F 465,115 430,150 380,190 200,410 100,540 20,655 E 1568,635 1440,845"],
  ["#7c1f30", "C 155,30 185,155 320,290 390,465 440,520 495,700 478,765 525,890 510,980 550,1190 630,1350 760,1380 795,1430 808,1568 F 808,60 830,112 900,135 1060,155 1175,240 1210,252 1305,252 1340,320 1390,355 1450,345 1514,315"],
  ["#8a55a8", "E 1400,900 1372,945 1370,1000 1450,1220 1568,1522 F 42,1522"],
  ["#0a7a62", "E 1120,535 1220,465 1400,430 1515,360 1525,310 1490,140 1490,85 1500,65 1568,38 F 0,55 130,0 C 130,1540 250,1510 310,1470 450,1445 530,1445 710,1380 730,1340 718,1240 730,1185 880,1110 885,1060 840,940 820,800 828,670 795,590 825,465 795,370 782,230 815,185 950,175 1130,140"],
  ["#0064d0", "C 930,30 950,100 965,250"],
  ["#ff2d62", "C 1514,1030 1445,1100 1440,1330 1470,1510 1500,1568 F 1514,45"],
  ["#ff2d62", "F 1060,155 1200,240 1450,240 1514,215"],
  ["#0064d0", "C 1235,1150 1275,1440 1275,1530 1240,1568 F 1250,30 1090,130 1060,180 1070,220 1140,265 1170,310 1250,590 1390,1120 1410,1250 1440,1460"],
];
const routes = [
  { edge: "#cc1050", w: 14, e: 20, d: "D 990,1345 1008,1200 985,1040 983,900 1010,860 1110,825 1210,785 1370,770 1520,745 E 30,745 180,742 220,728 320,635 390,540 470,495 600,440 640,365 740,290 900,180 975,118 1130,90 1270,82 1310,40 1325,5 B 1345,1500 C 0,1430 60,1408 170,1380 310,1340 350,1305 380,1250 450,1070 480,1010 520,985 610,965 690,920" },
  { edge: "#cc1050", w: 14, e: 20, d: "C 693,920 672,800 697,725 672,650 685,550 655,400 600,320 553,235" },
  { edge: "#cc1050", w: 14, e: 20, d: "D 858,1240 858,1270 870,1285 940,1290 985,1315" },
  { edge: "#f5b02e", w: 13, e: 19, d: "C 1258,1060 1250,965 1210,905 1165,810 1130,640 1080,520 1070,450 1000,320" },
  { edge: "#f5b02e", w: 13, e: 19, d: "C 1010,322 1110,285 1145,250 1180,240 1192,300" },
];
const stubs = [
  ["C", 553, 220, 25, "#cc1050"], ["C", 587, 193, 60, "#cc1050"], ["C", 615, 215, -35, "#cc1050"], ["C", 695, 925, -20, "#cc1050"],
  ["D", 858, 1225, 0, "#cc1050"], ["D", 850, 1178, 35, "#cc1050"], ["D", 990, 1345, 0, "#cc1050"],
  ["C", 998, 312, -15, "#f5b02e"], ["C", 1203, 322, -15, "#f5b02e"], ["C", 1222, 1155, -10, "#f5b02e"],
];
const shields = [
  ["A", 957, 43, "G2", "r"], ["A", 612, 640, "S58", "y"], ["A", 1398, 843, "G15", "r"], ["A", 910, 1217, "S224", "s"],
  ["B", 440, 38, "G2", "r"], ["B", 947, 160, "S20", "y"], ["B", 1515, 125, "G2", "r"], ["B", 1024, 857, "S20", "y"],
  ["B", 1123, 1449, "S20", "y"], ["B", 693, 1510, "G50", "r"], ["D", 573, 392, "G50", "r"], ["D", 1067, 276, "G50", "r"],
  ["D", 1447, 1090, "S124", "s"], ["D", 1413, 1540, "", "s"], ["E", 354, 412, "G15", "r"], ["E", 359, 913, "G15", "r"],
  ["E", 921, 969, "G60", "r"], ["E", 1501, 690, "G60", "r"], ["F", 969, 594, "S20", "y"], ["F", 1480, 488, "S20", "y"],
  ["F", 144, 1388, "S4", "y"], ["F", 1387, 1156, "S123", "s"],
];
const districts = [
  ["C", 367, 556, "长宁区"], ["C", 805, 90, "静安区"], ["C", 1120, 360, "黄浦区"],
  ["C", 517, 1097, "徐汇区"], ["C", 6, 42, "普陀区"], ["E", 1355, 860, "闵行区"],
];
const INK = "#48565f";
const PARK = "#466414";
const BRIDGE = "#7c2f33";
const names = (color, size, s) => list(s).map((l) => {
  const [t, x, y, ...rest] = l.split(" ");
  return { t, x: +x, y: +y, text: rest.join(" "), color, size };
});
const labels = [
  ...names(INK, 22, `A 422 122 北胡家角;A 42 375 陆家墙;A 446 340 杨家台;A 463 527 金家宅基;A 145 582 周家埭;A 400 705 陈家宅基;A 10 770 许家堰;A 697 887 瓜子浜;A 726 1290 潭泾
    A 205 1378 柳河泾;A 441 1454 庵墩泾;A 983 1540 徐家达;A 1258 1392 海日湾;A 1318 1155 官路浜;A 1283 917 泗田泾;A 1314 673 杨家塔;A 926 600 张塘浜;A 1314 471 康家弄;A 910 310 顾巷;A 1326 210 周泾;A 1404 32 山杜
    B -10 198 金家宅;B 227 273 延场;B 690 487 何更浪;B 590 670 山楼宅;B 845 704 绥宁村;B 257 1165 薄家塘;B 657 1322 池圈里;B 853 1488 航华三村
    D 262 148 里河泾;D -14 163 崧浦;D 613 226 赵巷;D 1172 239 泗安桥;D 845 451 红旗一队;D 525 497 中埭;D 188 593 蒲桃圩;D 490 740 朱泾;D 768 694 吴家桥;D 1008 660 和尚泾;D 1240 522 张干山;D 1522 405 北赵
    D 0 922 大圣庄;D 622 907 九十亩;D 1045 993 向阳桥;D 51 1102 江秋潭;D 60 1265 六万步;D 1025 1392 东鸟
    E 168 27 高家桥;E 421 209 北张杜浜;E 262 537 陶家;E 876 790 邱家桥;E 566 927 杨树园;E 416 1296 黄家浜;E 146 1392 朱家行;E 1159 1357 孙家桥
    F 1056 760 乔里康;F 1067 1003 中河;F 1386 943 秦家堰;F 942 1179 陶家桥;F 1086 1352 排马庙`),
  ...names(INK, 24, `A 338 1122 重固;B 300 465 华漕;B 1293 243 长征;B 1115 582 北新泾;B 1340 783 仙霞;B 1104 1263 龙柏;B 65 1371 徐泾;B 302 1007 上海虹桥站;B 713 1078 上海虹桥国际机场
    C 430 388 曹家渡;C 503 708 华山医院;C 811 785 瑞金医院;C 858 543 淮海路;C 25 936 古北;C 526 920 上海交通大学;C -48 1204 金虹桥;C 447 1310 上海体育馆;C 192 1457 漕河泾;C 1272 662 黄浦滨江
    C 1170 1043 艺术博物馆;C 1195 968 上海;C 1065 1285 工银中心上;C 1040 1361 海世博展览馆;C 1440 105 黄浦;D 527 1092 佘山;D 843 1153 上海欢乐谷;D 1402 1314 洞泾;D 1522 845 泗泾
    E 580 521 九亭;F 335 249 上海南站;F 73 486 锦江乐园;F 132 698 罗阳;F 1340 345 三林镇;F 1418 1382 浦江镇`),
  ...names(INK, 26, "A 257 896 重固镇;B 656 238 江桥镇;B 181 774 华漕镇;F 687 785 华泾镇;F 321 1043 梅陇镇"),
  ...names(PARK, 24, "C -50 557 长风公园;C 1357 223 东方明珠;C 1057 250 外滩;C 958 950 南园;D 385 1259 佘山国家;D 333 1334 旅游度假区;E 918 273 七宝老街;F 668 272 上海植物园"),
  ...names(BRIDGE, 22, "A 1030 52 东风港桥;D 1200 1458 中泾浜桥;D 1460 208 G50联民村桥;E 1345 765 莘庄立交;B 840 15 东沟北盐铁桥"),
];
const letters = (color, halo, size, rot, s) => list(s).map((l) => {
  const [t, x, y, ch] = l.split(" ");
  return { t, x: +x, y: +y, ch, color, halo, size, rot };
});
const BR = "#7a4a08";
const YH = "#ffd873";
const roadLetters = [
  ...letters(BR, YH, 21, -7, "A 710 622 沪;A 765 612 常;A 823 606 高;A 880 598 速;D 757 302 沪;D 812 290 渝;D 868 280 高;D 925 280 速"),
  ...letters(BR, YH, 21, 18, "A 1475 1035 沈;A 1495 1090 海;A 1520 1150 高;A 1545 1212 速"),
  ...letters(BR, YH, 21, -14, "B 398 598 北;B 455 595 翟;B 512 575 高;B 555 558 架;B 612 537 路;F 347 740 外;F 403 727 环;F 460 720 高;F 515 708 速"),
  ...letters(BR, YH, 20, -20, "E 722 178 嘉;E 750 230 闵;E 785 290 高;E 808 350 架;E 830 405 路"),
  ...letters(BR, YH, 21, 32, "E 775 1150 沪;E 740 1203 昆;E 710 1250 高;E 675 1305 速"),
  ...letters("#4f7d9c", "none", 23, 8, "C 880 1290 黄;C 885 1355 浦;C 895 1425 江;F 935 718 黄;F 915 780 浦;F 892 850 江"),
  ...letters("#e07fb5", "#fff", 23, 22, "B 1203 268 1;B 1228 295 3;B 1285 325 号;B 1340 345 线"),
  ...letters("#b79acb", "#fff", 23, -25, "B 1283 1040 1;B 1310 1015 0;B 1370 970 号;B 1415 945 线"),
  ...letters("#0a7a62", "#fff", 23, -18, "E 1345 438 1;E 1380 430 2;E 1437 400 号;E 1490 372 线"),
  ...letters("#8a55a8", "#fff", 23, 18, "E 1428 1210 5;E 1462 1260 号;E 1490 1325 线"),
  ...letters("#8048c0", "#fff", 22, 20, "C 298 200 4;C 262 255 号;C 238 308 线"),
  ...letters("#ff2d62", "#fff", 22, -5, "F 1320 245 6;F 1385 238 号;F 1440 235 线"),
  ...letters("#0064d0", "#fff", 22, 0, "F 1423 1450 8;F 1445 1505 号"),
];
const PARKC = "#569a10";
const SLATE = "#5a7387";
const pois = [
  ["C", 58, 473, FaTree, PARKC], ["F", 620, 272, FaTree, PARKC], ["C", 1005, 1030, FaTree, PARKC], ["D", 395, 1495, FaTree, PARKC], ["D", 26, 1495, FaTree, PARKC],
  ["C", 603, 627, FaPlus, "#f03c32"], ["C", 912, 703, FaPlus, "#f03c32"],
  ["C", 1312, 222, FaUniversity, SLATE], ["C", 1295, 880, FaUniversity, SLATE], ["C", 1192, 1203, FaUniversity, SLATE], ["C", 1200, 260, FaUniversity, SLATE],
  ["E", 1020, 190, FaUniversity, SLATE], ["D", 633, 1295, FaUniversity, SLATE], ["C", 478, 920, FaGraduationCap, SLATE],
  ["C", 573, 1228, FaBasketballBall, SLATE], ["B", 917, 996, FaPlane, "#2a7fd8"], ["B", 599, 1007, null, "#2a7fd8"], ["F", 435, 166, null, "#2a7fd8"],
];
const spots = [["D", 797, 1153], ["F", 174, 403]];
const pins = [["C", 630, 208], ["C", 991, 313], ["C", 1205, 308], ["C", 1248, 1180], ["D", 840, 1185]];

/* Evenly spaced direction marks along a polyline. */
function marks(points, step) {
  const out = [];
  let carry = step / 2;
  for (let i = 1; i < points.length; i++) {
    const [x1, y1] = points[i - 1];
    const [x2, y2] = points[i];
    const len = Math.hypot(x2 - x1, y2 - y1);
    const a = (Math.atan2(y2 - y1, x2 - x1) * 180) / Math.PI;
    while (carry <= len) {
      out.push([x1 + ((x2 - x1) * carry) / len, y1 + ((y2 - y1) * carry) / len, a]);
      carry += step;
    }
    carry -= len;
  }
  return out;
}

const Line = ({ d, color, w, dash, cap = "butt" }) => (
  <polyline points={pts(d)} fill="none" stroke={color} strokeWidth={w} strokeDasharray={dash} strokeLinejoin="round" strokeLinecap={cap} />
);

const Shield = ({ t, x, y, text, kind }) => {
  const [cx, cy] = at(t, x, y);
  if (kind === "s")
    return (
      <g transform={`translate(${cx},${cy})`}>
        <rect x="-24.5" y="-14.5" width="49" height="29" rx="3" fill="#e3a200" />
        <rect x="-23" y="-13" width="46" height="26" rx="2" fill="#ffe59a" />
        <rect x="-22" y="-12" width="44" height="24" rx="2" fill="#ffc21e" />
        <text y="6" textAnchor="middle" fontSize="17" fontFamily="Roboto, sans-serif" fontWeight="500" fill="#5a4a20">{text}</text>
      </g>
    );
  return (
    <g transform={`translate(${cx},${cy})`}>
      <rect x="-27.5" y="-15" width="55" height="30" rx="3" fill="#1cb896" />
      <rect x="-26" y="-13.5" width="52" height="27" rx="2" fill="#d8f5ee" />
      <rect x="-25" y="-12.5" width="50" height="25" rx="1.5" fill="#1cb896" />
      <rect x="-25" y="-12.5" width="50" height="5.5" fill={kind === "r" ? "#ff5449" : "#ffb800"} />
      <text y="8" textAnchor="middle" fontSize="18" fontFamily="Roboto, sans-serif" fontWeight="bold" fill="#fff">{text}</text>
    </g>
  );
};

const Poi = ({ t, x, y, Icon, color }) => {
  const [cx, cy] = at(t, x, y);
  return (
    <g transform={`translate(${cx},${cy})`}>
      <path d="M0-13.5A13 13 0 0 0-13.5 0A13 13 0 0 0 0 13.5H11.5a2 2 0 0 0 2-2V0A13 13 0 0 0 0-13.5Z" fill="#fff" stroke="#9a9ea3" strokeWidth="1.4" />
      {Icon ? (
        <Icon x={-9} y={-9} size={18} color={color} />
      ) : (
        <g fill="none" stroke={color} strokeWidth="2.4">
          <path d="M-4.500 5.500A7.500 7.500 0 1 1 4.500 5.500" />
          <path d="M-6 9H6M0 9V-1M-3.500-2H3.500" />
        </g>
      )}
    </g>
  );
};

const CityMap = () => (
  <Sheet viewBox="622 1302 2114 1200" preserveAspectRatio="none">
    <defs>
      <linearGradient id="pin" x1="0" y1="0" x2="0" y2="1">
        <stop offset="0" stopColor="#4c99ff" />
        <stop offset="1" stopColor="#1a86e6" />
      </linearGradient>
    </defs>
    <rect x="622" y="1302" width="2114" height="1200" fill="#fcf9f2" />
    {greens.map((g, i) => <polygon key={i} points={pts(g)} fill="#cfe6b4" />)}
    {creeks.map((c, i) => <Line key={i} d={c} color="#b4d6ea" w={i < 2 ? 3 : 2} dash={i > 4 && i % 3 === 0 ? "14 5 5 5" : undefined} />)}
    {canals.map((c, i) => <Line key={i} d={c} color="#b4d6ea" w={i ? 3.6 : 4.5} />)}
    {ponds.map((g, i) => <polygon key={i} points={pts(g)} fill="#b4d6ea" />)}
    <Line d={river} color="#b4d6ea" w={32} />
    <Line d="F 800,515 840,485 890,465" color="#8f9fd8" w={2} dash="6 4" />
    <Line d="F 915,1335 950,1320 1005,1315" color="#8f9fd8" w={3} dash="5 4" />
    <Line d="C 1240,350 1350,375 1365,500" color="#8f9fd8" w={2} dash="6 4" />
    <Line d="C 1360,700 1375,780 1385,860" color="#8f9fd8" w={2} dash="6 4" />
    {streets.map((s, i) => <Line key={i} d={s} color="#fadba0" w={8.6} />)}
    {streets.map((s, i) => <Line key={i} d={s} color="#fef9e9" w={4.8} />)}
    {railsGray.map((s, i) => <g key={i}><Line d={s} color="#a5a5a5" w={5} /><Line d={s} color="#fff" w={2} dash="11 11" /></g>)}
    {railsBlue.map((s, i) => <g key={i}><Line d={s} color="#5f7db3" w={8} /><Line d={s} color="#fff" w={2.2} dash="13 9" /></g>)}
    {arterials.map(([d, w], i) => <Line key={i} d={d} color="#eba64e" w={w + 3} />)}
    {blobs.filter((b) => b[1] === "a").map((b, i) => <polygon key={i} points={pts(b[0])} fill="#ffd266" stroke="#eba64e" strokeWidth="1.5" />)}
    {arterials.map(([d, w], i) => <Line key={i} d={d} color="#ffd266" w={w} />)}
    {motorways.map(([d, w], i) => <Line key={i} d={d} color="#e9923c" w={w + 3} />)}
    {blobs.filter((b) => b[1] === "m").map((b, i) => <polygon key={i} points={pts(b[0])} fill="#ffb25c" stroke="#e9923c" strokeWidth="1.5" />)}
    {motorways.map(([d, w], i) => <Line key={i} d={d} color="#ffb25c" w={w} />)}
    {metro.map(([c, d], i) => <g key={i}><Line d={d} color="#fff" w={6.4} /><Line d={d} color={c} w={4} /></g>)}
    <Line d="D 990,1370 1005,1522" color="#80c3c8" w={4.5} />
    {shields.map(([t, x, y, text, kind], i) => <Shield key={i} t={t} x={x} y={y} text={text} kind={kind} />)}
    {roadLetters.map((l, i) => {
      const [x, y] = at(l.t, l.x, l.y);
      return (
        <text key={i} transform={`translate(${x.toFixed(1)},${y.toFixed(1)}) rotate(${l.rot})`} y={l.size * 0.37} textAnchor="middle" fontSize={l.size} fill={l.color}
          stroke={l.halo} strokeWidth="2.2" paintOrder="stroke">{l.ch}</text>
      );
    })}
    {pois.map(([t, x, y, Icon, color], i) => <Poi key={i} t={t} x={x} y={y} Icon={Icon} color={color} />)}
    {spots.map(([t, x, y], i) => {
      const [cx, cy] = at(t, x, y);
      return (
        <g key={i} transform={`translate(${cx},${cy})`}>
          <path d="M0-8.500A8.500 8.500 0 1 0 0 8.500H8.500V0A8.500 8.500 0 0 0 0-8.500Z" fill="#fff" stroke="#9a9ea3" strokeWidth="1.3" />
          <circle r="3.800" fill={SLATE} />
        </g>
      );
    })}
    {labels.map((l, i) => {
      const [x, y] = at(l.t, l.x, l.y);
      return (
        <text key={i} x={(x - 0.6).toFixed(1)} y={(y + l.size * 0.38).toFixed(1)} fontSize={l.size} fill={l.color}
          stroke="#fffdf6" strokeWidth="2" strokeOpacity="0.8" paintOrder="stroke">{l.text}</text>
      );
    })}
    {districts.map(([t, x, y, text], i) => {
      const [cx, cy] = at(t, x, y);
      return (
        <g key={i}>
          <rect x={cx - 38} y={cy - 15} width="76" height="30" fill="#5b90e4" />
          <text x={cx} y={cy + 9} textAnchor="middle" fontSize="24" fontWeight="500" fill="#fff">{text}</text>
        </g>
      );
    })}
    {routes.map((r, i) => (
      <g key={i}>
        <Line d={r.d} color={r.edge} w={r.e} />
        <Line d={r.d} color="#0091ff" w={r.w} />
        {marks(parse(r.d), 50).map(([x, y, a], k) => (
          <path key={k} transform={`translate(${x.toFixed(1)},${y.toFixed(1)}) rotate(${a.toFixed(1)})`} d="M-3.500-5L2.500 0L-3.500 5" fill="none" stroke="#fff" strokeWidth="3" />
        ))}
      </g>
    ))}
    {stubs.map(([t, x, y, r, c], i) => {
      const [cx, cy] = at(t, x, y);
      return (
        <g key={i} transform={`translate(${cx},${cy}) rotate(${r})`}>
          <rect x="-9" y="-7" width="18" height="14" fill={c} />
          <rect x="-6" y="-6" width="12" height="12" fill="#7d7f82" />
        </g>
      );
    })}
    {pins.map(([t, x, y], i) => {
      const [cx, cy] = at(t, x, y);
      return (
        <g key={i} transform={`translate(${cx},${cy})`}>
          <ellipse rx="7" ry="3.500" fill="#555" opacity="0.4" />
          <path d="M0 0C-3-14-19-28-19-45A19 19.500 0 0 1 19-45C19-28 3-14 0 0Z" fill="url(#pin)" />
        </g>
      );
    })}
  </Sheet>
);

/* ================= icons ================= */
const UserCircle = () => (
  <svg viewBox="0 0 108 110">
    <circle cx="54" cy="55" r="54" fill="currentColor" />
    <ellipse cx="54" cy="39" rx="22" ry="24" fill="#cceee8" />
    <path d="M17 80C18 66 24 58 33 58C45 71 63 71 75 58C84 58 90 66 91 80C73 107 35 107 17 80Z" fill="#cceee8" />
  </svg>
);
const Suitcase = () => (
  <svg viewBox="46 78 270 249" preserveAspectRatio="none" fill="#fff">
    <path d="M90 120V327H84A38 40 0 0 1 46 287V160A38 40 0 0 1 84 120Z" />
    <path d="M272 120V327H278A38 40 0 0 0 316 287V160A38 40 0 0 0 278 120Z" />
    <path d="M105 327V120H123V93A15 15 0 0 1 138 78H225A15 15 0 0 1 240 93V120H258V327ZM143 120H225V99H143Z" />
  </svg>
);

const mapX = (t, x) => (at(t, x, 0)[0] - 622) / 10;
const mapY = (t, y) => (at(t, 0, y)[1] - 1302) / 10;

export default function App() {
  return (
    <>
      <Global />
      <Page>
        <Nav>
          <Brand>iTravel</Brand>
          <NavLinks>
            <NavLink>首页</NavLink>
            <NavLink>开始规划</NavLink>
            <NavLink>广场</NavLink>
            <NavLink><UserCircle />用户中心</NavLink>
          </NavLinks>
        </Nav>
        <Hero>
          <HeroTitle>
            <Suitcase />
            <span>旅行<Comma>，</Comma>从此开始</span>
          </HeroTitle>
        </Hero>
        <Card>
          <CardHead>
            <Rule />
            <CardTitle>路线生成成功<FaCheck /></CardTitle>
            <Rule />
          </CardHead>
          <Facts>
            <Fact $w="90.6rem">旅行日期: 01/26/2017 ~ 01/27/2017</Fact>
            <Fact>目的城市: 上海</Fact>
          </Facts>
          <Fact $gap="3rem">第1天: 欢乐谷 --&gt; 玉佛寺</Fact>
          <Fact $gap="1.4rem">第2天: 中华艺术宫 --&gt; 上海杜莎夫人蜡像馆 --&gt; 外滩</Fact>
          <MapBox>
            <MapClip>
              <CityMap />
              <Callout $x={mapX("C", 993)} $y={mapY("C", 26)}>上海杜莎夫人蜡像馆</Callout>
              <Callout $x={mapX("C", 1207)} $y={mapY("C", 21)}>外滩</Callout>
              <Callout $x={mapX("C", 1251)} $y={mapY("C", 896)}>中华艺术宫</Callout>
              <Callout $x={mapX("D", 842)} $y={mapY("D", 901)}>欢乐谷</Callout>
              <Watermark>高德地图</Watermark>
              <Attribution>© 2017 AutoNavi - GS(2016)710号</Attribution>
            </MapClip>
          </MapBox>
          <Choices>
            <Choice><Dot $on /><span>公开（接受拼团）</span></Choice>
            <Choice><Dot /><span>私密</span></Choice>
          </Choices>
          <Button>发布路线</Button>
          <Button $muted>重新选择</Button>
        </Card>
        <Footer>
          <FooterTop>
            <Column $w="50.3rem">
              <ColumnTitle>"网站名称"</ColumnTitle>
              <ColumnItem>上海曹安公路4800同济<br />大学嘉大荒软件学院</ColumnItem>
              <ColumnItem $gap="1.5rem">Github</ColumnItem>
              <ColumnItem $gap="1.1rem">+86 12345678901</ColumnItem>
            </Column>
            <Divider />
            <Column $w="50.4rem" $pad="16.8rem" $spaced>
              <ColumnTitle>快速链接</ColumnTitle>
              <ColumnItem>主页</ColumnItem>
              <ColumnItem $gap="2rem">规划路线</ColumnItem>
              <ColumnItem $gap="2rem">拼团</ColumnItem>
            </Column>
            <Divider />
            <Column $w="50rem" $pad="16.4rem" $spaced>
              <ColumnTitle>更多</ColumnTitle>
              <ColumnItem>关于我们</ColumnItem>
              <ColumnItem $gap="2rem">加入我们</ColumnItem>
              <ColumnItem $gap="2rem">其他产品</ColumnItem>
              <ColumnItem $gap="1.4rem">FAQ</ColumnItem>
            </Column>
          </FooterTop>
          <Legal>
            <LegalLine>Designed and built with all the love in the world by a shaky team.</LegalLine>
            <LegalLine>Maintained by the core team with the help of our contributors.</LegalLine>
            <LegalLine $gap="3.1rem" $tall>Copyright©一个有zayy的项目组 All Rights Reserved（2016-）版权所有 复制必究。</LegalLine>
            <LegalLine $tall>{"当前版本： v1.0.0"}</LegalLine>
          </Legal>
        </Footer>
      </Page>
    </>
  );
}
